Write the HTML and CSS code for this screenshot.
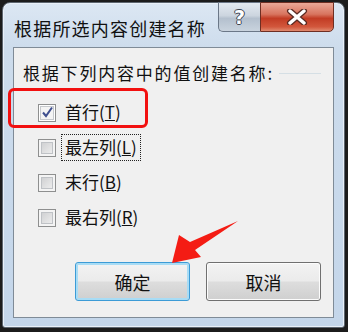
FILE: index.html
```html
<!DOCTYPE html>
<html lang="zh-CN">
<head>
    <meta charset="UTF-8">
    <meta name="viewport" content="width=device-width, initial-scale=1.0">
    <title>根据所选内容创建名称</title>
    <link rel="stylesheet" href="styles.css">
</head>
<body>
    <div class="window">
        <div class="titlebar">
            <div class="title">根据所选内容创建名称</div>
            <div class="caption-buttons">
                <div class="help-btn">?</div>
                <div class="close-btn">
                    <svg width="26" height="16" viewBox="0 0 26 16">
                        <path d="M6 2 L20 14 M20 2 L6 14" stroke="#5a2a22" stroke-width="6" stroke-linecap="round"/>
                        <path d="M6 2 L20 14 M20 2 L6 14" stroke="#fff" stroke-width="3.4" stroke-linecap="round"/>
                    </svg>
                </div>
            </div>
        </div>
        <div class="client">
            <div class="group-label">
                <span>根据下列内容中的值创建名称:</span>
                <span class="group-line"></span>
            </div>
            <div class="options">
                <div class="option">
                    <span class="checkbox checked">
                        <svg width="13" height="13" viewBox="0 0 13 13">
                            <path d="M2 6.5 L5 10 L11 1.5" fill="none" stroke="#3f4f8f" stroke-width="2"/>
                        </svg>
                    </span>
                    <span class="option-text">首行(<u>T</u>)</span>
                </div>
                <div class="option">
                    <span class="checkbox"></span>
                    <span class="option-text focused">最左列(<u>L</u>)</span>
                </div>
                <div class="option">
                    <span class="checkbox"></span>
                    <span class="option-text">末行(<u>B</u>)</span>
                </div>
                <div class="option">
                    <span class="checkbox"></span>
                    <span class="option-text">最右列(<u>R</u>)</span>
                </div>
            </div>
            <div class="actions">
                <button class="btn default">确定</button>
                <button class="btn">取消</button>
            </div>
        </div>
    </div>

    <!-- annotation overlays -->
    <div class="highlight-box"></div>
    <svg class="arrow" width="348" height="332" viewBox="0 0 348 332">
        <polygon points="172,263 179,235 190,242 238,221 195,250 201,257" fill="#f41c14"/>
    </svg>
</body>
</html>
```

FILE: styles.css
```css
body {
    margin: 0;
    width: 348px;
    height: 332px;
    background-color: #1c1c1c;
    font-family: "Noto Sans CJK SC", "Liberation Sans", sans-serif;
    color: #111;
    overflow: hidden;
    position: relative;
}

.window {
    margin: 2px 0 0 2px;
    width: 343px;
    height: 326px;
    box-sizing: border-box;
    border: 1px solid #5d6670;
    border-radius: 8px 8px 3px 3px;
    background: linear-gradient(to bottom, #dce7f3 0px, #cddcec 45px, #c4d6ea 100%);
    display: flex;
    flex-direction: column;
    box-shadow: inset 0 0 0 1px #e9f0f8;
}

.titlebar {
    height: 44px;
    display: flex;
    justify-content: space-between;
    align-items: flex-start;
    padding: 0 10px 0 11px;
}

.title {
    font-size: 18px;
    letter-spacing: 1.2px;
    line-height: 20px;
    padding-top: 15px;
}

.caption-buttons {
    display: flex;
    margin-top: -1px;
}

.help-btn {
    width: 42px;
    height: 30px;
    box-sizing: border-box;
    border: 1px solid #6b7787;
    border-right: none;
    border-radius: 0 0 0 5px;
    background: linear-gradient(to bottom, #e4eaf1 0%, #ccd5df 45%, #b4c0ce 55%, #c9d3de 100%);
    color: #fff;
    font-family: "DejaVu Sans", sans-serif;
    font-weight: bold;
    font-size: 19px;
    line-height: 28px;
    text-align: center;
    text-shadow: 1px 0 0 #3c4652, -1px 0 0 #3c4652, 0 1px 0 #3c4652, 0 -1px 0 #3c4652;
}

.close-btn {
    width: 74px;
    height: 30px;
    box-sizing: border-box;
    border: 1px solid #6e2e22;
    border-radius: 0 0 5px 0;
    background: linear-gradient(to bottom, #eaa897 0%, #d8755f 40%, #c23c24 55%, #d2573c 85%, #e08a6f 100%);
    display: flex;
    align-items: center;
    justify-content: center;
}

.client {
    margin: 0 10px 9px 10px;
    flex: 1;
    border: 1px solid #7f8b97;
    background-color: #f0f0f0;
    padding: 14px 12px 0 9px;
    display: flex;
    flex-direction: column;
}

.group-label {
    display: flex;
    align-items: center;
    font-size: 17px;
    letter-spacing: 1.8px;
    line-height: 22px;
}

.group-line {
    flex: 1;
    height: 1px;
    margin-left: 5px;
    background-color: #d5dfe5;
}

.options {
    margin-top: 11px;
    padding-left: 15px;
    display: flex;
    flex-direction: column;
}

.option {
    height: 35px;
    display: flex;
    align-items: center;
}

.checkbox {
    width: 18px;
    height: 18px;
    box-sizing: border-box;
    border: 1px solid #8e8f8f;
    background: linear-gradient(135deg, #c8c9cb 0%, #f4f4f4 100%);
    box-shadow: inset 0 0 0 2px #f4f4f4, inset 0 0 0 3px #bfc2c6;
    display: flex;
    align-items: center;
    justify-content: center;
}

.checkbox.checked {
    background: #f4f4f4;
    box-shadow: inset 0 0 0 1px #ffffff, inset 0 0 0 2px #c6c9cd;
}

.option-text {
    margin-left: 5px;
    padding: 0 3px;
    height: 27px;
    box-sizing: border-box;
    border: 1px dotted transparent;
    font-size: 17px;
    line-height: 24px;
}

.option-text.focused {
    border-color: #222;
}

.actions {
    margin-top: 27px;
    display: flex;
    justify-content: flex-end;
    gap: 16px;
}

.btn {
    width: 115px;
    height: 39px;
    border: 1px solid #707070;
    border-radius: 3px;
    background: linear-gradient(to bottom, #f3f3f3 0%, #ebebeb 48%, #dddddd 52%, #cfcfcf 100%);
    box-shadow: inset 0 0 0 1px #fcfcfc;
    font-family: "Noto Sans CJK SC", sans-serif;
    font-size: 18px;
    color: #111;
    padding: 0;
}

.btn.default {
    border-color: #3c9bd6;
    box-shadow: inset 0 0 0 2px #a8dcf5;
}

.highlight-box {
    position: absolute;
    left: 8px;
    top: 88px;
    width: 134px;
    height: 34px;
    border: 3px solid #f21010;
    border-radius: 6px;
}

.arrow {
    position: absolute;
    left: 0;
    top: 0;
}
```
